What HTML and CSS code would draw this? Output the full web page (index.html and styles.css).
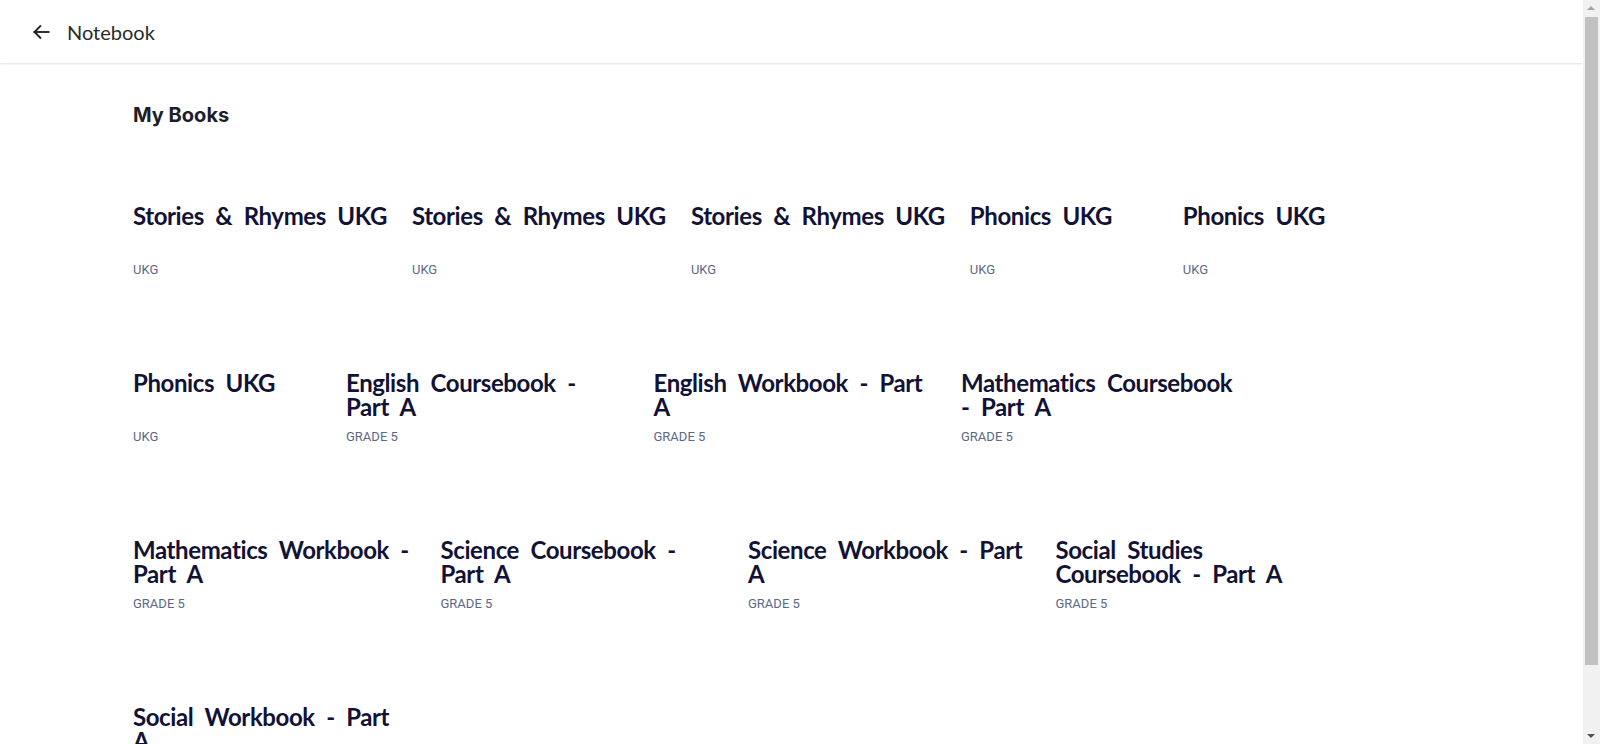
FILE: index.html
```html
<!DOCTYPE html>
<html lang="en">
<head>
<meta charset="utf-8">
<title>Notebook</title>
<link rel="stylesheet" href="styles.css">
</head>
<body>
<header class="topbar">
  <button class="back" aria-label="Back">
    <svg width="24" height="24" viewBox="0 0 24 24" fill="none" stroke="#222" stroke-width="1.9" stroke-linecap="square"><path d="M19.5 12H5.5"/><path d="M11.3 6.2L5.5 12L11.3 17.8"/></svg>
  </button>
  <span class="topbar-title">Notebook</span>
</header>
<main class="page">
  <h2 class="section-title">My Books</h2>
  <div class="books">
    <div class="book"><div class="book-title">Stories &amp; Rhymes UKG</div><div class="book-grade">UKG</div></div>
    <div class="book"><div class="book-title">Stories &amp; Rhymes UKG</div><div class="book-grade">UKG</div></div>
    <div class="book"><div class="book-title">Stories &amp; Rhymes UKG</div><div class="book-grade">UKG</div></div>
    <div class="book"><div class="book-title">Phonics UKG</div><div class="book-grade">UKG</div></div>
    <div class="book"><div class="book-title">Phonics UKG</div><div class="book-grade">UKG</div></div>
    <div class="book"><div class="book-title">Phonics UKG</div><div class="book-grade">UKG</div></div>
    <div class="book"><div class="book-title">English Coursebook - Part A</div><div class="book-grade">GRADE 5</div></div>
    <div class="book"><div class="book-title">English Workbook - Part A</div><div class="book-grade">GRADE 5</div></div>
    <div class="book"><div class="book-title">Mathematics Coursebook - Part A</div><div class="book-grade">GRADE 5</div></div>
    <div class="book"><div class="book-title">Mathematics Workbook - Part A</div><div class="book-grade">GRADE 5</div></div>
    <div class="book"><div class="book-title">Science Coursebook - Part A</div><div class="book-grade">GRADE 5</div></div>
    <div class="book"><div class="book-title">Science Workbook - Part A</div><div class="book-grade">GRADE 5</div></div>
    <div class="book"><div class="book-title">Social Studies Coursebook - Part A</div><div class="book-grade">GRADE 5</div></div>
    <div class="book"><div class="book-title">Social Workbook - Part A</div><div class="book-grade">GRADE 5</div></div>
  </div>
</main>
<div class="scrollbar" aria-hidden="true">
  <span class="scroll-arrow scroll-up"></span>
  <span class="scroll-thumb"></span>
  <span class="scroll-arrow scroll-down"></span>
</div>
</body>
</html>
```
FILE: styles.css
```css
html, body {
  margin: 0;
  padding: 0;
  background: #fff;
}
body {
  font-family: "Lato", "Open Sans", sans-serif;
  color: #141432;
  padding-right: 17px;
}
.topbar {
  height: 63px;
  display: flex;
  align-items: center;
  padding-left: 29px;
  background: #fff;
  box-shadow: 0 1px 2px rgba(0, 0, 0, 0.12);
  position: relative;
}
.back {
  width: 24px;
  height: 24px;
  padding: 0;
  border: 0;
  background: none;
  display: flex;
  align-items: center;
  justify-content: center;
  margin-top: 1px;
}
.topbar-title {
  margin-left: 14px;
  font-family: "Lato", sans-serif;
  font-size: 20px;
  color: #2b2b2b;
  line-height: 24px;
}
.page {
  padding: 38px 116px 34px 133px;
}
.section-title {
  margin: 0 0 75px;
  font-family: "Inter", "Lato", sans-serif;
  font-size: 20px;
  line-height: 28px;
  font-weight: 700;
  color: #1e1e2a;
}
.books {
  display: flex;
  flex-wrap: wrap;
  column-gap: 25px;
  row-gap: 93px;
}
.book {
  min-width: 188px;
  max-width: 282.5px;
}
.book-title {
  font-size: 24px;
  line-height: 24px;
  font-weight: 700;
  letter-spacing: -0.4px;
  word-spacing: 6px;
  height: 48px;
  color: #121236;
}
.book-grade {
  margin-top: 10px;
  font-family: "Roboto", sans-serif;
  font-size: 13px;
  line-height: 16px;
  color: #5b6888;
}
.scrollbar {
  position: fixed;
  top: 0;
  right: 0;
  width: 17px;
  height: 100vh;
  background: #f1f1f1;
}
.scroll-thumb {
  position: absolute;
  top: 17px;
  left: 2px;
  width: 13px;
  height: 648px;
  background: #c1c1c1;
}
.scroll-arrow {
  position: absolute;
  left: 4px;
  width: 0;
  height: 0;
  border-left: 4.5px solid transparent;
  border-right: 4.5px solid transparent;
}
.scroll-up {
  top: 6px;
  border-bottom: 4px solid #a3a3a3;
}
.scroll-down {
  bottom: 6px;
  border-top: 4px solid #505050;
}
```
